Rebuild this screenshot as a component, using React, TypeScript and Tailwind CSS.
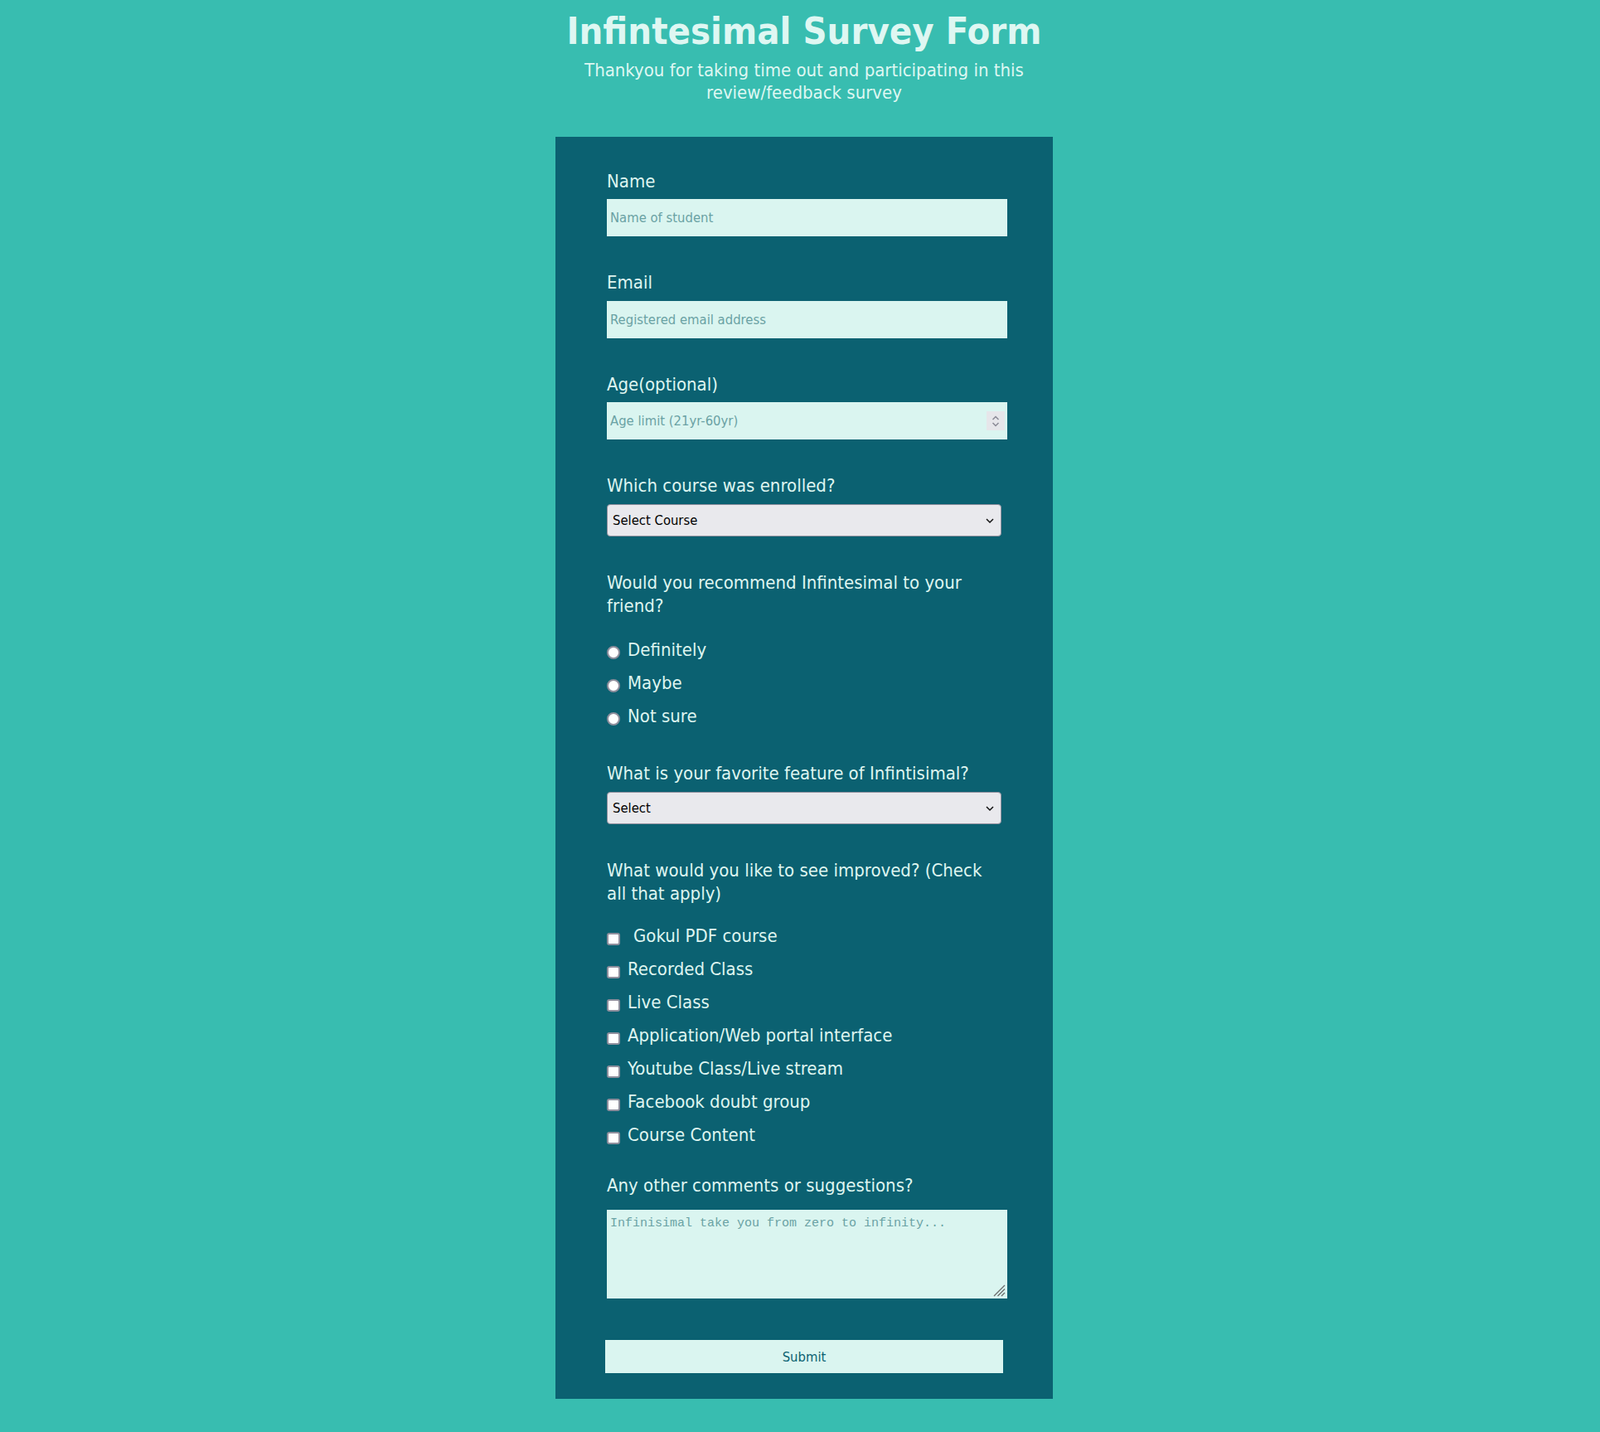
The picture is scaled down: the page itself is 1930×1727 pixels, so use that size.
import React from 'react';

const font = "font-['DejaVu_Sans_Condensed','DejaVu_Sans',sans-serif]";

const Label = ({ children, className = '' }: { children: React.ReactNode; className?: string }) => (
  <label className={`block text-[22px] leading-[28px] text-[#def5f0] ${className}`}>{children}</label>
);

const Chevron = () => (
  <svg width="12" height="8" viewBox="0 0 12 8" className="pointer-events-none absolute right-[8px] top-1/2 -translate-y-1/2">
    <path d="M2 2 L6 6 L10 2" fill="none" stroke="#111" strokeWidth="1.5" />
  </svg>
);

const Select = ({ text, className = '' }: { text: string; className?: string }) => (
  <div className={`relative w-[476px] ${className}`}>
    <select className={`h-[39px] w-full appearance-none rounded-[4px] border border-[#8f8f9d] bg-[#e9e9ed] pl-[6px] pt-[2px] text-[16.5px] text-black ${font}`}>
      <option>{text}</option>
    </select>
    <Chevron />
  </div>
);

const Radio = ({ label }: { label: string }) => (
  <div className="flex h-[40px] items-center gap-[9px]">
    <span className="mt-[6px] h-4 w-4 rounded-full border-2 border-[#8f8f9d] bg-white" />
    <span className="text-[22px] leading-[28px] text-[#def5f0]">{label}</span>
  </div>
);

const Check = ({ label, extra }: { label: string; extra?: boolean }) => (
  <div className="flex h-[40px] items-center gap-[9px]">
    <span className="mt-[6px] h-[15px] w-4 rounded-[3px] border-2 border-[#8f8f9d] bg-white" />
    <span className={`text-[22px] leading-[28px] text-[#def5f0] ${extra ? 'pl-[7px]' : ''}`}>{label}</span>
  </div>
);

const inputCls = `block h-[45px] w-[483px] bg-[#daf5f0] pl-[4px] text-[16.5px] text-[#0b6171] outline-none placeholder:text-[#6aa2a4] ${font}`;

export default function App() {
  return (
    <div className={`min-h-screen bg-[#38bdb0] pl-[10px] pb-[40px] ${font}`}>
      <header className="pt-[14px] text-center">
        <h1 className="text-[45px] font-bold leading-[48px] text-[#def7f2]">Infintesimal Survey Form</h1>
        <p className="mx-auto mt-[9px] max-w-[560px] text-[22px] leading-[27px] text-[#def7f2]">
          Thankyou for taking time out and participating in this review/feedback survey
        </p>
      </header>

      <form className="mx-auto mt-[40px] w-[600px] bg-[#0b6171] px-[62px] pt-[40px] pb-[31px]">
        <Label>Name</Label>
        <input className={`mt-[7px] ${inputCls}`} placeholder="Name of student" />

        <Label className="mt-[42px]">Email</Label>
        <input className={`mt-[8px] ${inputCls}`} placeholder="Registered email address" />

        <Label className="mt-[42px]">Age(optional)</Label>
        <div className="relative mt-[7px] w-[483px]">
          <input className={inputCls} placeholder="Age limit (21yr-60yr)" />
          <div className="pointer-events-none absolute right-[3px] top-[11px] flex h-[23px] w-[22px] items-center justify-center bg-[#e6e6ea]">
            <svg width="12" height="18" viewBox="0 0 12 18">
              <path d="M2.5 7 L6 3.5 L9.5 7" fill="none" stroke="#8a8a96" strokeWidth="1.5" />
              <path d="M2.5 11 L6 14.5 L9.5 11" fill="none" stroke="#8a8a96" strokeWidth="1.5" />
            </svg>
          </div>
        </div>

        <Label className="mt-[42px]">Which course was enrolled?</Label>
        <Select text="Select Course" className="mt-[8px]" />

        <Label className="mt-[42px]">Would you recommend Infintesimal to your friend?</Label>
        <div className="mt-[19px]">
          <Radio label="Definitely" />
          <Radio label="Maybe" />
          <Radio label="Not sure" />
        </div>

        <Label className="mt-[35px]">What is your favorite feature of Infintisimal?</Label>
        <Select text="Select" className="mt-[8px]" />

        <Label className="mt-[42px]">What would you like to see improved? (Check all that apply)</Label>
        <div className="mt-[17px]">
          <Check label="Gokul PDF course" extra />
          <Check label="Recorded Class" />
          <Check label="Live Class" />
          <Check label="Application/Web portal interface" />
          <Check label="Youtube Class/Live stream" />
          <Check label="Facebook doubt group" />
          <Check label="Course Content" />
        </div>

        <Label className="mt-[27px]">Any other comments or suggestions?</Label>
        <div className="relative mt-[15px] w-[483px]">
          <textarea
            className="block h-[107px] w-full resize-none bg-[#daf5f0] px-[4px] pt-[6px] font-['Liberation_Mono',monospace] text-[15px] text-[#0b6171] outline-none placeholder:text-[#6aa2a4]"
            placeholder="Infinisimal take you from zero to infinity..."
          />
          <svg width="15" height="15" viewBox="0 0 15 15" className="pointer-events-none absolute bottom-[2px] right-[2px]">
            <path d="M14 1 L1 14 M14 5.5 L5.5 14 M14 10 L10 14" stroke="#6b6b6b" strokeWidth="1.3" />
          </svg>
        </div>

        <button
          type="button"
          className={`-ml-[2px] mt-[50px] block h-[40px] w-[480px] bg-[#daf5f0] pt-[2px] text-[16.5px] text-[#0b6171] ${font}`}
        >
          Submit
        </button>
      </form>
    </div>
  );
}
